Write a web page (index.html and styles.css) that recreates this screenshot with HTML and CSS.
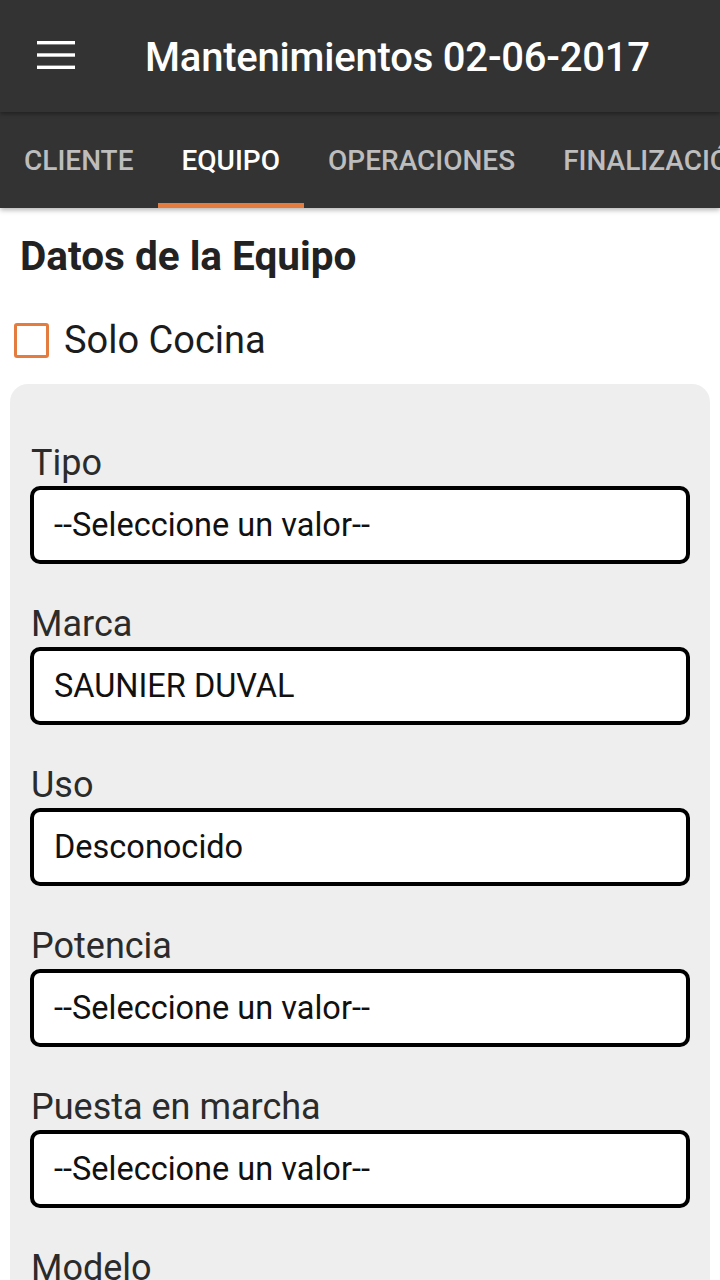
FILE: index.html
```html
<!DOCTYPE html>
<html lang="es">
<head>
<meta charset="utf-8">
<title>Mantenimientos</title>
<link rel="stylesheet" href="styles.css">
</head>
<body>
<header class="appbar">
  <div class="menu-btn">
    <svg width="38" height="28" viewBox="0 0 38 28"><rect x="0" y="0" width="38" height="3.4" fill="#fff"/><rect x="0" y="12.3" width="38" height="3.4" fill="#fff"/><rect x="0" y="24.6" width="38" height="3.4" fill="#fff"/></svg>
  </div>
  <h1 class="title">Mantenimientos 02-06-2017</h1>
</header>
<nav class="tabs">
  <div class="tab">CLIENTE</div>
  <div class="tab active">EQUIPO</div>
  <div class="tab">OPERACIONES</div>
  <div class="tab">FINALIZACIÓN</div>
</nav>
<main class="content">
  <h2 class="heading">Datos de la Equipo</h2>
  <label class="check-row"><span class="checkbox"></span><span class="check-label">Solo Cocina</span></label>
  <section class="panel">
    <div class="field"><div class="label">Tipo</div><div class="input">--Seleccione un valor--</div></div>
    <div class="field"><div class="label">Marca</div><div class="input">SAUNIER DUVAL</div></div>
    <div class="field"><div class="label">Uso</div><div class="input">Desconocido</div></div>
    <div class="field"><div class="label">Potencia</div><div class="input">--Seleccione un valor--</div></div>
    <div class="field"><div class="label">Puesta en marcha</div><div class="input">--Seleccione un valor--</div></div>
    <div class="field"><div class="label">Modelo</div><div class="input"></div></div>
  </section>
</main>
</body>
</html>
```
FILE: styles.css
```css
* { box-sizing: border-box; }
html, body { margin: 0; padding: 0; }
body {
  width: 720px;
  height: 1280px;
  overflow: hidden;
  background: #fff;
  font-family: Roboto, "Noto Sans", sans-serif;
  color: #1a1a1a;
}
.appbar {
  height: 112px;
  background: #333333;
  display: flex;
  align-items: center;
  position: relative;
  z-index: 2;
  box-shadow: 0 2px 4px rgba(0,0,0,0.35);
}
.menu-btn {
  width: 145px;
  padding-left: 37px;
  display: flex;
  align-items: center;
  margin-top: -2px;
}
.menu-btn svg { display: block; }
.title {
  margin: 0;
  color: #fff;
  font-size: 40px;
  font-weight: 500;
  letter-spacing: -0.2px;
  margin-top: 2px;
  white-space: nowrap;
}
.tabs {
  height: 96px;
  background: #333333;
  display: flex;
  white-space: nowrap;
  overflow: hidden;
  position: relative;
  z-index: 1;
  box-shadow: 0 2px 5px rgba(0,0,0,0.3);
}
.tab {
  padding: 5px 24px 0 24px;
  display: flex;
  align-items: center;
  justify-content: center;
  flex-shrink: 0;
  color: #bdbdbd;
  font-size: 28px;
  font-weight: 500;
  border-bottom: 5px solid transparent;
}
.tab.active {
  color: #fff;
  border-bottom-color: #e57c3f;
}
.content {
  padding: 0 10px;
}
.heading {
  margin: 0;
  padding: 24px 0 0 10px;
  font-size: 40.5px;
  font-weight: 700;
  color: #222;
  line-height: 48px;
  white-space: nowrap;
}
.check-row {
  display: flex;
  align-items: center;
  margin-top: 40px;
  padding-left: 4px;
}
.checkbox {
  width: 35px;
  height: 35px;
  border: 3px solid #e57c3f;
  border-radius: 3px;
  display: block;
  flex-shrink: 0;
}
.check-label {
  margin-left: 15px;
  font-size: 38px;
  color: #1c1c1c;
  line-height: 40px;
}
.panel {
  margin-top: 24px;
  background: #eeeeee;
  border-radius: 18px;
  padding: 59px 20px 0 20px;
  height: 1000px;
}
.field { margin-bottom: 40px; }
.label {
  font-size: 36px;
  line-height: 40px;
  margin-bottom: 3px;
  color: #2b2b2b;
  padding-left: 1px;
  white-space: nowrap;
}
.input {
  height: 78px;
  background: #fff;
  border: 4px solid #000;
  border-radius: 10px;
  display: flex;
  align-items: center;
  padding-left: 20px;
  font-size: 32.5px;
  color: #111;
  white-space: nowrap;
}
```
